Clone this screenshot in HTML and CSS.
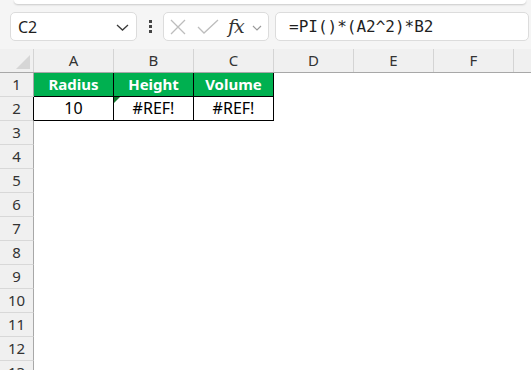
FILE: index.html
```html
<!DOCTYPE html>
<html>
<head>
<meta charset="utf-8">
<link rel="stylesheet" href="styles.css">
</head>
<body>
<div class="app">
  <div class="ribbon-edge"></div>
  <div class="formula-bar">
    <div class="name-box">
      <span class="name-text">C2</span>
      <svg class="chev" width="13" height="7" viewBox="0 0 13 7"><path d="M1 1 L6.5 6 L12 1" fill="none" stroke="#3a3a3a" stroke-width="1.3"/></svg>
    </div>
    <div class="kebab"><i></i><i></i><i></i></div>
    <div class="fn-box">
      <svg width="16" height="16" viewBox="0 0 16 16"><path d="M1 1 L15 15 M15 1 L1 15" stroke="#bdbdbd" stroke-width="1.3" fill="none"/></svg>
      <svg class="check" width="22" height="15" viewBox="0 0 22 15"><path d="M1 8 L7 14 L21 1" stroke="#bdbdbd" stroke-width="1.3" fill="none"/></svg>
      <span class="fx">fx</span>
      <svg class="fx-chev" width="10" height="6" viewBox="0 0 10 6"><path d="M1 1 L5 5 L9 1" fill="none" stroke="#9a9a9a" stroke-width="1.2"/></svg>
    </div>
    <div class="formula-box">=PI()*(A2^2)*B2</div>
  </div>
  <div class="sheet">
    <div class="row head-row">
      <div class="corner"><span class="tri"></span></div>
      <div class="ch">A</div><div class="ch">B</div><div class="ch">C</div><div class="ch">D</div><div class="ch">E</div><div class="ch">F</div><div class="ch last"></div>
    </div>
    <div class="row">
      <div class="rh">1</div>
      <div class="cell hdr">Radius</div><div class="cell hdr">Height</div><div class="cell hdr">Volume</div>
    </div>
    <div class="row">
      <div class="rh dark">2</div>
      <div class="cell val">10</div><div class="cell val err"><span class="flag"></span>#REF!</div><div class="cell val">#REF!</div>
    </div>
    <div class="row"><div class="rh">3</div></div>
    <div class="row"><div class="rh">4</div></div>
    <div class="row"><div class="rh">5</div></div>
    <div class="row"><div class="rh">6</div></div>
    <div class="row"><div class="rh">7</div></div>
    <div class="row"><div class="rh">8</div></div>
    <div class="row"><div class="rh">9</div></div>
    <div class="row"><div class="rh">10</div></div>
    <div class="row"><div class="rh">11</div></div>
    <div class="row"><div class="rh">12</div></div>
    <div class="row"><div class="rh">13</div></div>
  </div>
</div>
</body>
</html>
```
FILE: styles.css
```css
* { box-sizing: border-box; }
html, body { margin: 0; padding: 0; }
body {
  width: 531px;
  height: 370px;
  overflow: hidden;
  background: #ffffff;
  font-family: "Noto Sans", "Open Sans", sans-serif;
}
.app {
  background: #f5f5f5;
  height: 370px;
  overflow: hidden;
}
.ribbon-edge {
  height: 4px;
  margin: 0 5px 0 14px;
  background: #ffffff;
  border-radius: 0 0 6px 6px;
  box-shadow: 0 1px 2px rgba(0,0,0,0.18);
}
.formula-bar {
  display: flex;
  align-items: center;
  height: 29px;
  margin-top: 8px;
  padding-left: 10px;
}
.name-box {
  flex-shrink: 0;
  width: 127px;
  height: 29px;
  background: #fff;
  border: 1px solid #dcdcdc;
  border-radius: 5px;
  display: flex;
  align-items: center;
  justify-content: space-between;
  padding: 0 7px 0 7px;
}
.name-text {
  font-size: 16px;
  color: #1f1f1f;
  line-height: 1;
}
.chev { margin-top: 2px; }
.kebab {
  flex-shrink: 0;
  width: 26px;
  display: flex;
  flex-direction: column;
  align-items: center;
  gap: 2px;
  padding-left: 1px;
}
.kebab i {
  display: block;
  width: 3px;
  height: 3px;
  background: #444;
}
.fn-box {
  flex-shrink: 0;
  width: 106px;
  height: 29px;
  background: #fff;
  border: 1px solid #dcdcdc;
  border-radius: 5px;
  display: flex;
  align-items: center;
  padding-left: 6px;
}
.fn-box .check { margin-left: 11px; }
.fx {
  font-family: "DejaVu Serif", "Liberation Serif", serif;
  font-style: italic;
  font-size: 19px;
  color: #333;
  margin-left: 9px;
  letter-spacing: -1px;
  line-height: 1;
}
.fx-chev { margin-left: 8px; margin-top: 2px; }
.formula-box {
  flex-shrink: 0;
  width: 254px;
  height: 29px;
  margin-left: 6px;
  background: #fff;
  border: 1px solid #dcdcdc;
  border-radius: 5px;
  padding-left: 13px;
  font-family: "DejaVu Sans Mono", "Liberation Mono", monospace;
  font-size: 16px;
  line-height: 27px;
  color: #1f1f1f;
}
.sheet {
  margin-top: 8px;
}
.row {
  display: flex;
  height: 24px;
  background: #fff;
}
.row > div { flex-shrink: 0; }
.head-row {
  background: #f0f0f0;
  border-bottom: 1px solid #a8a8a8;
  height: 24px;
}
.corner {
  width: 34px;
  border-right: 1px solid #d4d4d4;
  position: relative;
}
.tri {
  position: absolute;
  right: 3px;
  bottom: 3px;
  width: 0;
  height: 0;
  border-left: 14px solid transparent;
  border-bottom: 14px solid #d6d6d6;
}
.ch {
  width: 80px;
  border-right: 1px solid #d4d4d4;
  text-align: center;
  font-size: 15px;
  line-height: 23px;
  color: #333;
}
.ch.last { width: 40px; }
.rh {
  width: 34px;
  background: #f0f0f0;
  border-right: 1px solid #a8a8a8;
  border-bottom: 1px solid #d8d8d8;
  text-align: center;
  font-size: 15px;
  line-height: 23px;
  color: #333;
}
.rh.dark { border-right-color: #000; }
.cell {
  width: 80px;
  border-right: 1px solid #000;
  border-bottom: 1px solid #000;
  text-align: center;
  font-size: 15px;
  line-height: 23px;
}
.hdr {
  background: #00b050;
  color: #fff;
  font-weight: bold;
}
.val {
  color: #000;
  background: #fff;
  font-size: 16px;
}
.err { position: relative; }
.flag {
  position: absolute;
  left: 0;
  top: 0;
  width: 0;
  height: 0;
  border-top: 6px solid #137a2e;
  border-right: 6px solid transparent;
}
```
